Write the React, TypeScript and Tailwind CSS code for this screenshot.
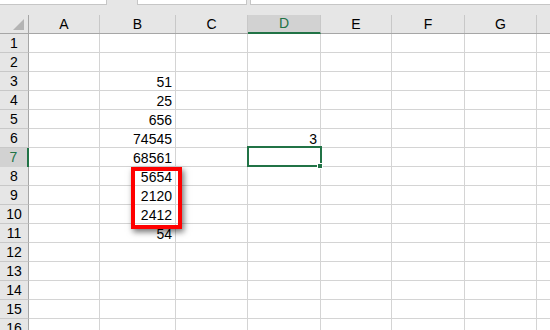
import React from 'react';

const cols = [
  { key: 'A', w: 'w-[71px]' },
  { key: 'B', w: 'w-[76px]' },
  { key: 'C', w: 'w-[72px]' },
  { key: 'D', w: 'w-[73px]' },
  { key: 'E', w: 'w-[71px]' },
  { key: 'F', w: 'w-[73px]' },
  { key: 'G', w: 'w-[72px]' },
];

const data: Record<string, string> = {
  B3: '51',
  B4: '25',
  B5: '656',
  B6: '74545',
  B7: '68561',
  B8: '5654',
  B9: '2120',
  B10: '2412',
  B11: '54',
  D6: '3',
};

const rows = Array.from({ length: 16 }, (_, i) => i + 1);

function HeaderRow() {
  return (
    <div className="flex h-[19px] border-b border-[#a6a6a6] bg-[#e6e6e6]">
      <div className="relative w-[29px] shrink-0 border-r border-[#a6a6a6]">
        <div className="absolute right-[4px] bottom-[3px] w-0 h-0 border-l-[11px] border-l-transparent border-b-[11px] border-b-[#b4b4b4]" />
      </div>
      {cols.map((c) =>
        c.key === 'D' ? (
          <div
            key={c.key}
            className={`${c.w} shrink-0 h-[19px] -mb-px border-r border-[#c8c8c8] border-b-2 border-b-[#217346] bg-[#d2d2d2] text-[#217346] text-center leading-[17px]`}>
            {c.key}
          </div>
        ) : (
          <div
            key={c.key}
            className={`${c.w} shrink-0 border-r border-[#c8c8c8] text-center leading-[18px]`}>
            {c.key}
          </div>
        )
      )}
      <div className="flex-1" />
    </div>
  );
}

function Row({ n }: { n: number }) {
  const active = n === 7;
  return (
    <div className="flex h-[19px] border-b border-[#d4d4d4]">
      <div
        className={
          active
            ? 'w-[29px] shrink-0 h-[19px] -mb-px border-r-2 border-[#217346] bg-[#d2d2d2] text-[#217346] text-center leading-[19px]'
            : 'w-[29px] shrink-0 h-[19px] -mb-px border-r border-[#a6a6a6] border-b border-b-[#c8c8c8] bg-[#e6e6e6] text-center leading-[19px]'
        }>
        {n}
      </div>
      {cols.map((c) => (
        <div
          key={c.key}
          className={`${c.w} shrink-0 border-r border-[#d4d4d4] text-right pr-[3px] pt-[2px] leading-[16px]`}>
          {data[`${c.key}${n}`] ?? ''}
        </div>
      ))}
      <div className="flex-1" />
    </div>
  );
}

export default function App() {
  return (
    <div className="relative w-[550px] h-[330px] overflow-hidden bg-white text-[14px] text-black font-['Liberation_Sans',Arial,sans-serif]">
      <div className="flex h-[15px] bg-[#e6e6e6]">
        <div className="w-[107px] h-[5px] bg-white border-r border-b border-[#c6c6c6]" />
        <div className="ml-[30px] w-[110px] h-[5px] bg-white border-x border-b border-[#c6c6c6]" />
        <div className="ml-[3px] flex-1 h-[5px] bg-white border-l border-b border-[#c6c6c6]" />
      </div>
      <HeaderRow />
      {rows.map((n) => (
        <Row key={n} n={n} />
      ))}

      <div className="absolute left-[247px] top-[146px] w-[75px] h-[21px] border-2 border-[#217346]" />
      <div className="absolute left-[317px] top-[163px] w-[6px] h-[6px] bg-[#217346] border border-white" />

      <div className="absolute left-[131px] top-[167px] w-[51px] h-[62px] border-4 border-[#ff0000] shadow-[2px_3px_6px_rgba(0,0,0,0.55)]" />
    </div>
  );
}
